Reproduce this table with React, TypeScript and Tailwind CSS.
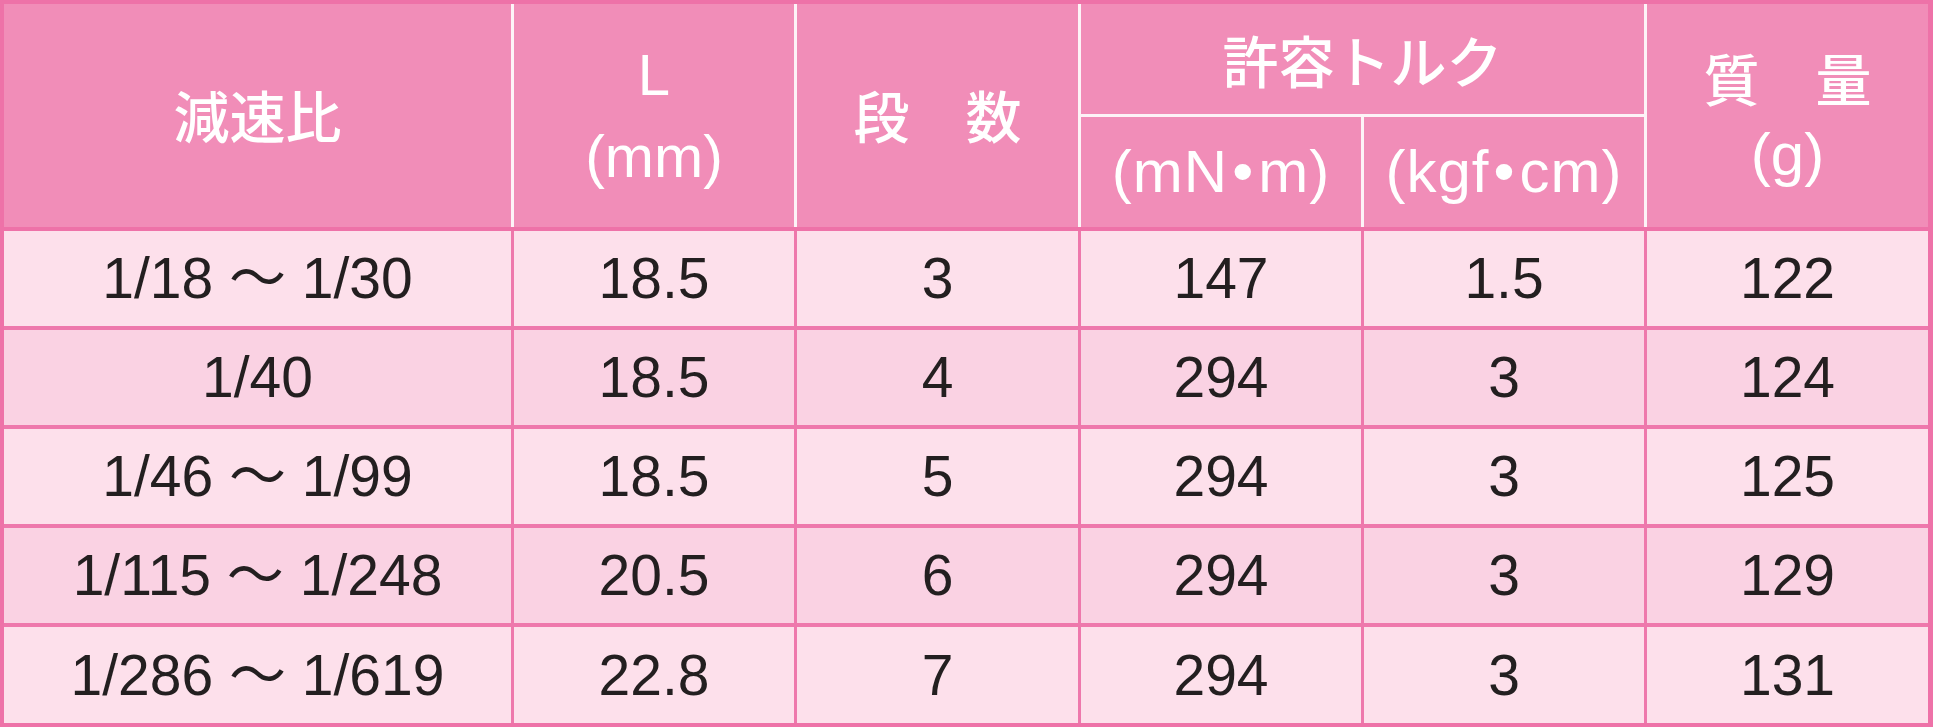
import React from "react";

type Row = {
  ratio: string;
  length: string;
  stages: string;
  torqueMn: string;
  torqueKgf: string;
  mass: string;
};

const rows: Row[] = [
  { ratio: "1/18 ～ 1/30", length: "18.5", stages: "3", torqueMn: "147", torqueKgf: "1.5", mass: "122" },
  { ratio: "1/40", length: "18.5", stages: "4", torqueMn: "294", torqueKgf: "3", mass: "124" },
  { ratio: "1/46 ～ 1/99", length: "18.5", stages: "5", torqueMn: "294", torqueKgf: "3", mass: "125" },
  { ratio: "1/115 ～ 1/248", length: "20.5", stages: "6", torqueMn: "294", torqueKgf: "3", mass: "129" },
  { ratio: "1/286 ～ 1/619", length: "22.8", stages: "7", torqueMn: "294", torqueKgf: "3", mass: "131" },
];

const jp = "font-['Noto_Sans_CJK_JP',sans-serif] font-medium";
const latin = "font-['Liberation_Sans','Noto_Sans_CJK_JP',sans-serif]";

const HeadCell: React.FC<{ className?: string; children: React.ReactNode }> = ({
  className = "",
  children,
}) => (
  <div
    className={`bg-[#f18db8] text-white flex flex-col items-center justify-center text-center ${className}`}
  >
    {children}
  </div>
);

const App: React.FC = () => {
  return (
    <div className="w-[1933px] h-[727px] bg-[#ee72a8] pt-[4px] pl-[4px] pr-[5px] pb-[4px] flex flex-col gap-[4px]">
      {/* header */}
      <div className="grid grid-cols-[507px_280px_281px_280px_280px_281px] grid-rows-[110px_110px] gap-[3px] bg-[#fdf3f7]">
        <HeadCell className="row-span-2">
          <span className={`${jp} text-[56px] leading-none pb-[4px]`}>減速比</span>
        </HeadCell>
        <HeadCell className="row-span-2">
          <span className={`${latin} text-[58px] leading-[82px]`}>L</span>
          <span className={`${latin} text-[59px] leading-[82px]`}>(mm)</span>
        </HeadCell>
        <HeadCell className="row-span-2">
          <span className={`${jp} text-[56px] leading-none pb-[4px]`}>段　数</span>
        </HeadCell>
        <HeadCell className="col-span-2">
          <span className={`${jp} text-[56px] leading-none`}>許容トルク</span>
        </HeadCell>
        <HeadCell className="row-span-2">
          <span className={`${jp} text-[56px] leading-[78px]`}>質　量</span>
          <span className={`${latin} text-[60px] leading-[78px]`}>(g)</span>
        </HeadCell>
        <HeadCell>
          <span className={`${latin} text-[60px] leading-none tracking-[1px]`}>
            (mN<span className="mx-[4px]">•</span>m)
          </span>
        </HeadCell>
        <HeadCell>
          <span className={`${latin} text-[60px] leading-none tracking-[1px]`}>
            (kgf<span className="mx-[4px]">•</span>cm)
          </span>
        </HeadCell>
      </div>

      {/* body */}
      <div className="grid grid-cols-[507px_280px_281px_280px_280px_281px] grid-rows-[95px_95px_95px_95px_96px] gap-x-[3px] gap-y-[4px] bg-[#ee78ac]">
        {rows.map((r, i) => {
          const bg = i % 2 === 0 ? "bg-[#fde0eb]" : "bg-[#fad2e3]";
          const cell = `${bg} ${latin} text-[57px] leading-none text-[#231f20] flex items-center justify-center`;
          return (
            <React.Fragment key={r.ratio}>
              <div className={cell}>{r.ratio}</div>
              <div className={cell}>{r.length}</div>
              <div className={cell}>{r.stages}</div>
              <div className={cell}>{r.torqueMn}</div>
              <div className={cell}>{r.torqueKgf}</div>
              <div className={cell}>{r.mass}</div>
            </React.Fragment>
          );
        })}
      </div>
    </div>
  );
};

export default App;
